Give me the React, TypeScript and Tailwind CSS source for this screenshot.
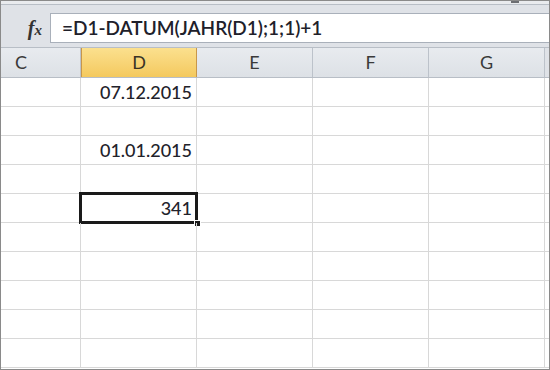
const cols = [
  { id: "C", w: "w-[80px]" },
  { id: "D", w: "w-[116px]" },
  { id: "E", w: "w-[116px]" },
  { id: "F", w: "w-[116px]" },
  { id: "G", w: "w-[116px]" },
]

const values: Record<number, string> = { 0: "07.12.2015", 2: "01.01.2015", 4: "341" }

export default function App() {
  const rows = Array.from({ length: 10 }, (_, i) => i)

  return (
    <div
      className="w-[550px] h-[370px] overflow-hidden bg-white border border-[#8a8a8a] flex flex-col"
      style={{ fontFamily: "Lato, 'Open Sans', sans-serif" }}
    >
      {/* top strip */}
      <div className="h-[4px] bg-[#e9ebee] border-b border-[#b8bec6] relative shrink-0">
        <div className="absolute left-[510px] top-0 w-[8px] h-[2px] bg-[#6d6f73]" />
      </div>
      <div className="h-[8px] bg-[#dfe2e7] shrink-0" />

      {/* formula bar */}
      <div className="flex h-[30px] bg-[#dfe2e7] shrink-0">
        <div className="w-[49px] flex items-center justify-end pr-[8px]">
          <span
            className="text-[20px] italic font-bold text-[#333] leading-none"
            style={{ fontFamily: "'Liberation Serif', serif" }}
          >
            f<span className="text-[15px]">x</span>
          </span>
        </div>
        <div className="flex-1 bg-white border-t border-b border-l border-[#a9b0ba] flex items-center pl-[11px]">
          <span className="text-[19px] font-semibold text-[#20202a]">
            =D1-DATUM(JAHR(D1);1;1)+1
          </span>
        </div>
      </div>
      <div className="h-[5px] bg-[#dfe2e7] border-b border-[#b8bec6] shrink-0" />

      {/* column headers */}
      <div className="flex h-[30px] shrink-0 border-b border-[#b8bec6]">
        {cols.map((c) => (
          <div
            key={c.id}
            className={
              c.id === "D"
                ? `${c.w} shrink-0 flex items-center justify-center bg-gradient-to-b from-[#fbe08e] to-[#f4c95d] border-l border-r border-[#c8974a] text-[#3a3326] text-[18px]`
                : `${c.w} shrink-0 flex items-center ${c.id === "C" ? "pl-[14px]" : "justify-center"} bg-gradient-to-b from-[#e8ebef] to-[#dde1e6] border-r border-[#bcc2ca] text-[#3a3a3a] text-[18px]`
            }
          >
            {c.id}
          </div>
        ))}
        <div className="flex-1 bg-[#dfe2e7]" />
      </div>

      {/* grid */}
      <div className="flex-1 flex flex-col">
        {rows.map((r) => (
          <div key={r} className="flex h-[29px] shrink-0 border-b border-[#d8d8d8]">
            {cols.map((c) => {
              const isD = c.id === "D"
              const selected = isD && r === 4
              return (
                <div
                  key={c.id}
                  className={`${c.w} shrink-0 border-r border-[#d8d8d8] relative flex items-center justify-end pr-[4px] text-[18px] font-medium text-[#22222a]`}
                >
                  {isD && values[r] ? <span>{values[r]}</span> : null}
                  {selected ? (
                    <>
                      <div className="absolute left-[-2px] top-[-2px] right-[-2px] bottom-[-2px] border-[3px] border-[#1a1a1a]" />
                      <div className="absolute right-[-5px] bottom-[-5px] w-[7px] h-[7px] bg-[#1a1a1a] border border-white" />
                    </>
                  ) : null}
                </div>
              )
            })}
            <div className="flex-1" />
          </div>
        ))}
      </div>
    </div>
  )
}
